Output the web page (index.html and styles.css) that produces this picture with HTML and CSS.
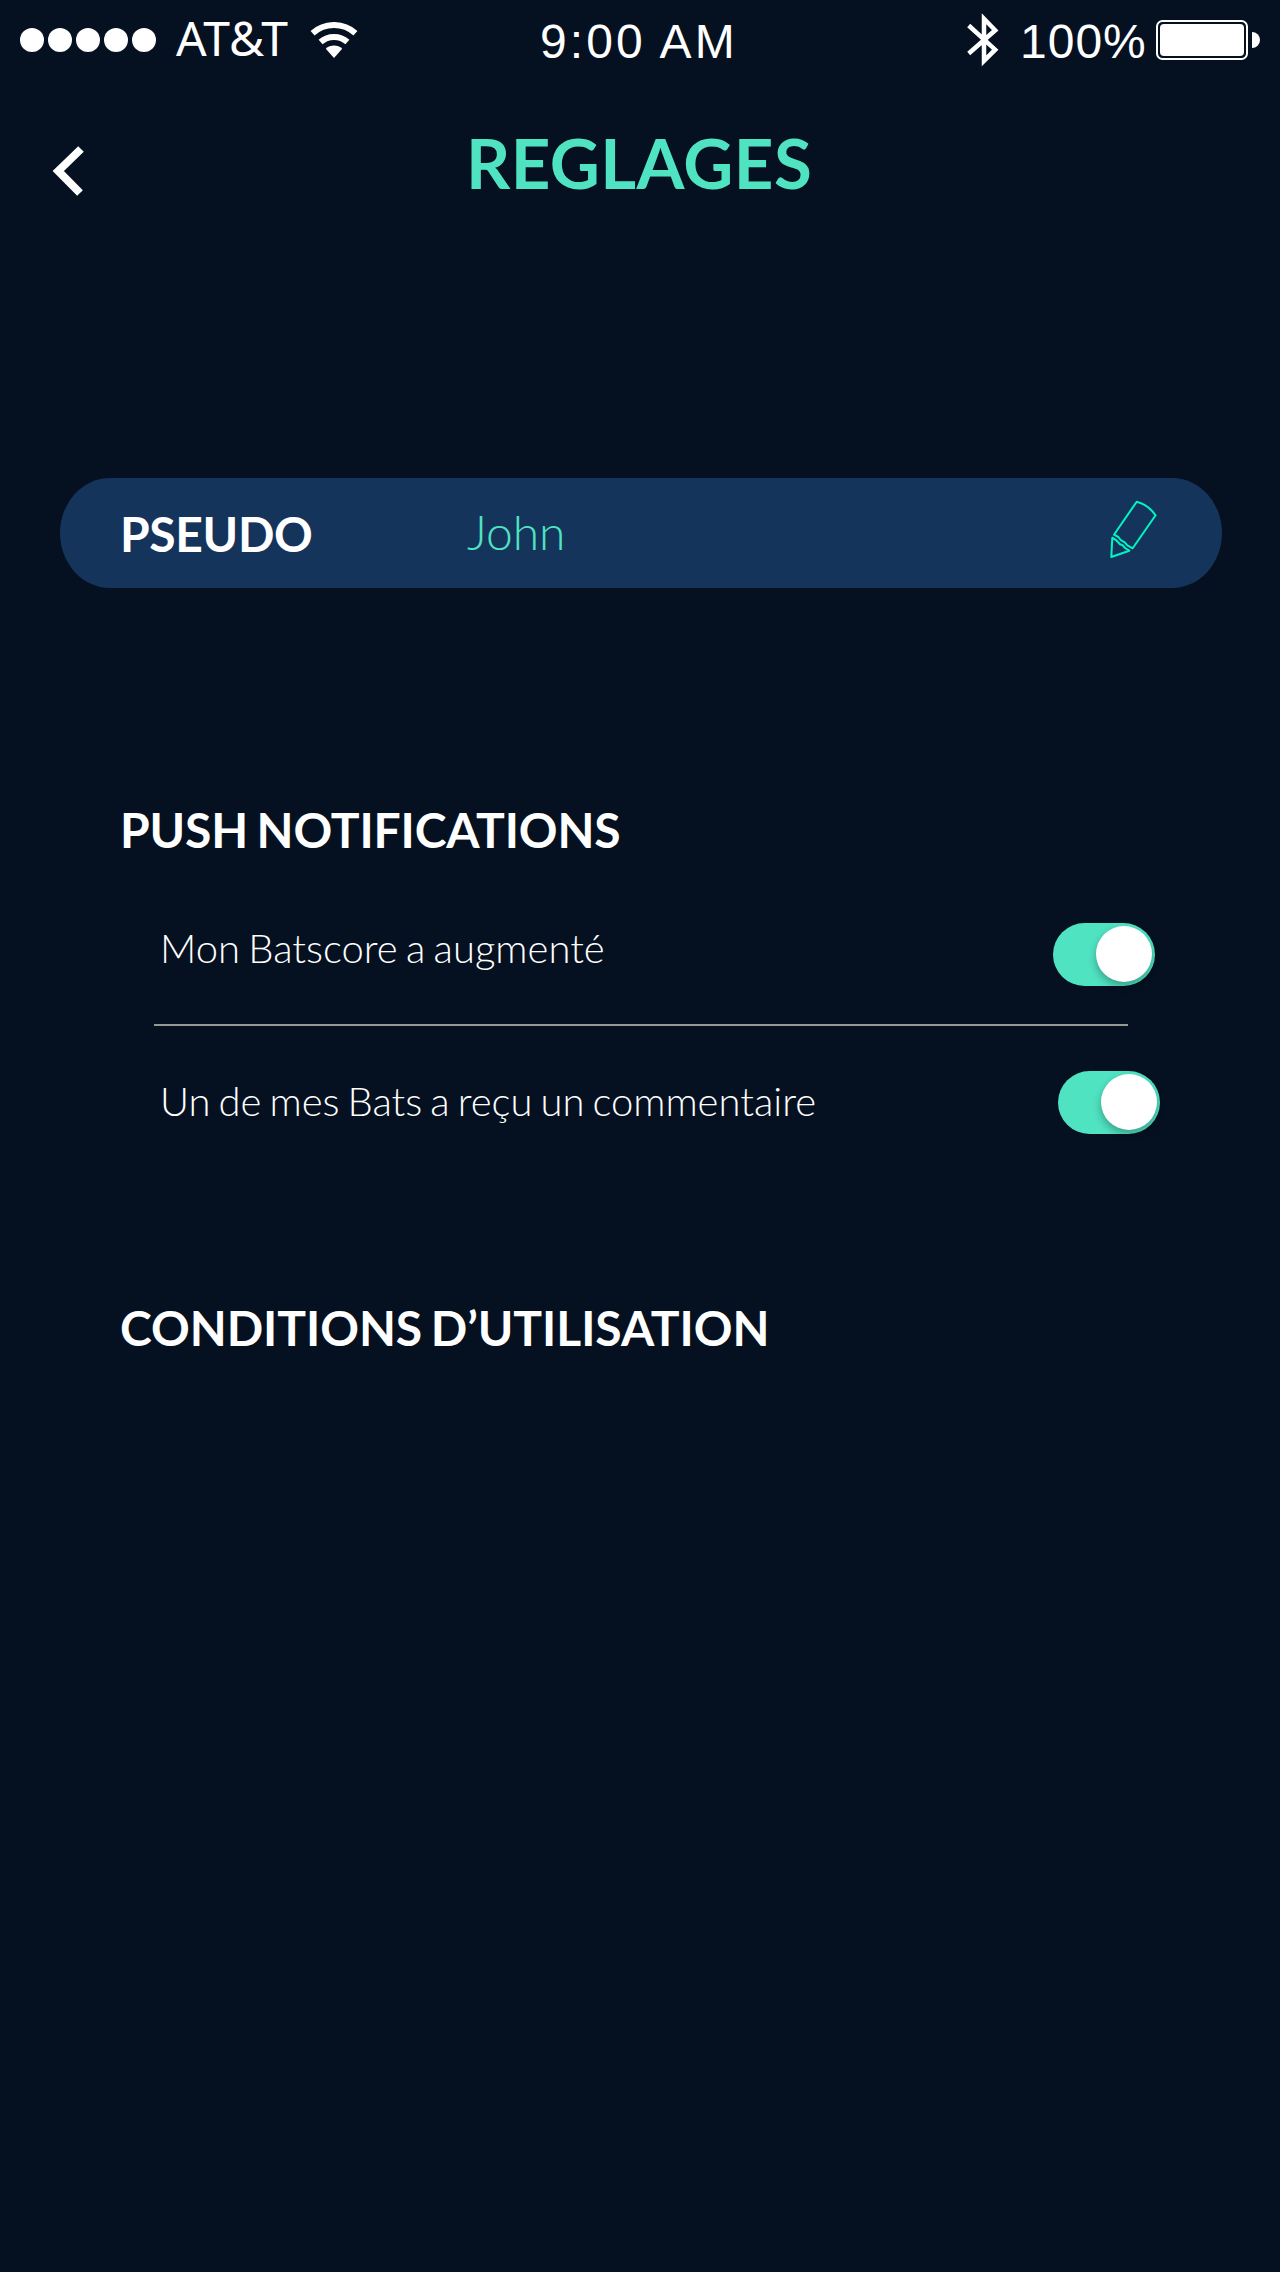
FILE: index.html
```
<!DOCTYPE html>
<html lang="fr">
<head>
<meta charset="utf-8">
<title>Réglages</title>
<link rel="stylesheet" href="styles.css">
</head>
<body>
<header class="status">
  <div class="status-left">
    <span class="dots"><i class="dot"></i><i class="dot"></i><i class="dot"></i><i class="dot"></i><i class="dot"></i></span>
    <span class="carrier">AT&amp;T</span>
    <svg class="wifi" width="48" height="37" viewBox="0 0 48 37">
      <g fill="none" stroke="#fff" stroke-width="6">
        <path d="M2.600 11.200A32 32 0 0 1 45.400 11.200"/>
        <path d="M10.600 20.100A20 20 0 0 1 37.400 20.100"/>
      </g>
      <path d="M15.800 26.800A12 12 0 0 1 32.200 26.800L24 36Z" fill="#fff"/>
    </svg>
  </div>
  <span class="clock">9:00 AM</span>
  <div class="status-right">
    <svg class="bluetooth" width="34" height="54" viewBox="0 0 34 54">
      <path d="M2.700 12.500L29.200 36.700L18 47.900V5.800L29.200 17.300L2.700 40.500" fill="none" stroke="#fff" stroke-width="4.500"/>
    </svg>
    <span class="percent">100%</span>
    <svg class="battery" width="104" height="40" viewBox="0 0 104 40">
      <rect x="1" y="1" width="90" height="38" rx="5.500" fill="none" stroke="#fff" stroke-width="2"/>
      <rect x="4" y="4" width="84" height="32" rx="4" fill="#fff"/>
      <path d="M96 12A8 8 0 0 1 96 28Z" fill="#fff"/>
    </svg>
  </div>
</header>
<nav class="nav">
  <svg class="back" width="36" height="50" viewBox="0 0 36 50">
    <path d="M31 3L8.300 25L30 47" fill="none" stroke="#fff" stroke-width="8"/>
  </svg>
  <h1 class="title">REGLAGES</h1>
</nav>
<main>
  <section class="field">
    <span class="field-label">PSEUDO</span>
    <span class="field-value">John</span>
    <svg class="pencil" width="48" height="60" viewBox="0 0 48 60">
      <g fill="none" stroke="#00f5c4" stroke-width="2" stroke-linejoin="round">
        <path d="M26.700 1.700Q38 4.500 45.600 15.300L22.700 48.300L17.300 45.300L15 42.700L10.700 40L8.300 37L4 34.700Z"/>
        <path d="M2.300 37.700L1.300 57L19.300 50.700L15 48L12.700 45.300L10 44.300L6.700 40.700Z"/>
      </g>
    </svg>
  </section>
  <h2 class="heading">PUSH NOTIFICATIONS</h2>
  <ul class="options">
    <li class="option"><span class="option-label">Mon Batscore a augmenté</span><span class="toggle"><i class="knob"></i></span></li>
    <li class="option option-last"><span class="option-label">Un de mes Bats a reçu un commentaire</span><span class="toggle"><i class="knob"></i></span></li>
  </ul>
  <h2 class="heading">CONDITIONS D’UTILISATION</h2>
</main>
</body>
</html>
```
FILE: styles.css
```
* { box-sizing: border-box; }
body {
  margin: 0;
  width: 1280px;
  height: 2272px;
  background: #051121;
  color: #fff;
  font-family: Lato, sans-serif;
}
svg { display: block; flex: none; }
.status {
  display: flex;
  justify-content: space-between;
  height: 80px;
  padding: 0 20px;
  white-space: nowrap;
}
.status-left { display: flex; width: 520px; }
.dots { display: flex; gap: 4px; margin-top: 28px; }
.dot { width: 24px; height: 24px; border-radius: 50%; background: #fff; }
.carrier {
  margin: 5px 0 0 20px;
  width: 134px;
  font: 48px/65px "Noto Sans", sans-serif;
}
.wifi { margin-top: 22px; }
.clock {
  margin-top: 15px;
  width: 200px;
  font: 48px/53px "Liberation Sans", sans-serif;
  letter-spacing: 3.1px;
}
.status-right { display: flex; flex: 1; justify-content: flex-end; }
.bluetooth { margin: 13px 20px 0 0; }
.percent {
  margin: 15px 0 0;
  width: 136px;
  font: 48px/53px "Liberation Sans", sans-serif;
  letter-spacing: 1px;
}
.battery { margin-top: 20px; }
.nav { display: flex; height: 398px; padding: 40px 0 0 50px; }
.back { margin-top: 26px; }
.title {
  margin: 0 0 0 380px;
  font-weight: 700;
  font-size: 69px;
  line-height: 85px;
  letter-spacing: 0.4px;
  color: #50e3c2;
}
.field {
  display: flex;
  width: 1162px;
  height: 110px;
  margin-left: 60px;
  padding: 0 64px 0 60px;
  border-radius: 50px / 55px;
  background: #15345c;
  font-size: 48px;
  line-height: 57px;
}
.field-label { width: 347px; margin-top: 27px; font-weight: 700; letter-spacing: -0.35px; }
.field-value { flex: 1; margin-top: 25px; font-weight: 300; color: #50e3c2; }
.pencil { margin-top: 22px; }
.heading {
  margin: 213px 0 0 120px;
  font-size: 48px;
  font-weight: 700;
  line-height: 57px;
  letter-spacing: -0.15px;
  word-spacing: -3px;
}
.options { margin: 65px 122px 0 154px; padding: 0; list-style: none; }
.option {
  display: flex;
  justify-content: space-between;
  height: 103px;
  width: 1001px;
  padding-left: 6px;
  background: linear-gradient(#979797, #979797) left bottom / 974px 2px no-repeat;
}
.option-label {
  margin-top: 1px;
  font-size: 40px;
  font-weight: 300;
  line-height: 48px;
  word-spacing: -2.6px;
}
.option-last { width: 1006px; height: 108px; padding-top: 45px; background: none; }
.option-last .option-label { margin-top: 6px; word-spacing: -2.85px; }
.toggle {
  display: flex;
  justify-content: flex-end;
  flex: none;
  width: 102px;
  height: 62.5px;
  padding: 3px;
  border-radius: 32px;
  background: #50e3c2;
}
.knob {
  width: 56px;
  height: 56px;
  border-radius: 50%;
  background: #fff;
  box-shadow: 0 4px 8px rgba(0, 0, 0, .3);
}
.options + .heading { margin-top: 165px; letter-spacing: -0.05px; }
```
